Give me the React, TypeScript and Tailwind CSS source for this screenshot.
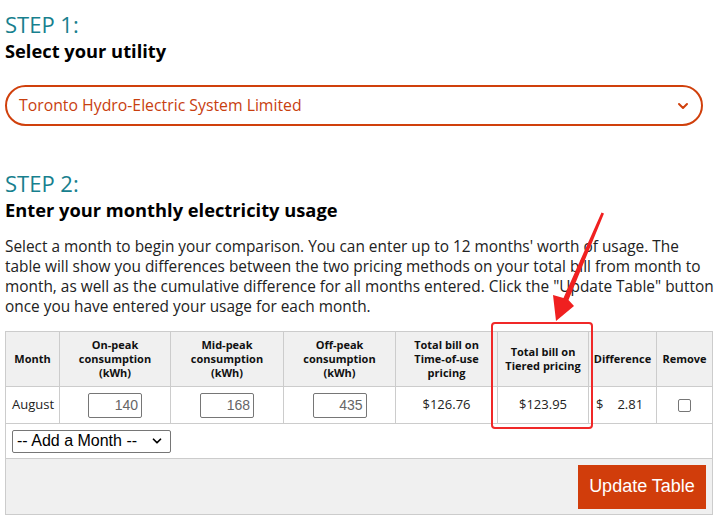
import { ChevronDown } from 'lucide-react';

const headCell = 'border border-[#cccccc] bg-[#f0f0f0] px-1 text-center align-middle text-[11px] font-bold leading-[14px] text-[#111]';
const bodyCell = 'border border-[#cccccc] px-1 align-middle text-[13px] text-[#222]';

function UsageInput({ value }: { value: string }) {
  return (
    <input
      type="text"
      defaultValue={value}
      className="h-[25px] w-[54px] rounded-[2px] border border-[#767676] bg-white pr-[3px] text-right text-[14px] text-[#666] [font-family:'Liberation_Sans',Arial,sans-serif]"
    />
  );
}

export default function App() {
  return (
    <div className="relative h-[524px] w-[720px] overflow-hidden bg-white pl-[5px] [font-family:'Open_Sans',sans-serif]">
      {/* Step 1 */}
      <h2 className="pt-[10px] text-[22px] leading-[28px] text-[#17808e]">STEP 1:</h2>
      <h3 className="mt-[1px] text-[18.3px] font-bold leading-[24px] text-black">Select your utility</h3>

      <div className="mt-[22px] flex h-[41px] w-[698px] items-center justify-between rounded-full border-2 border-[#d0400c] pl-[12px] pr-[10px]">
        <span className="text-[15.8px] text-[#c8400f]">Toronto Hydro-Electric System Limited</span>
        <ChevronDown className="h-[16px] w-[16px] text-[#d0400c]" strokeWidth={3} />
      </div>

      {/* Step 2 */}
      <h2 className="mt-[43px] text-[22px] leading-[28px] text-[#17808e]">STEP 2:</h2>
      <h3 className="mt-[1px] text-[18.3px] font-bold leading-[24px] text-black">Enter your monthly electricity usage</h3>

      <p className="mt-[15px] whitespace-nowrap text-[15.4px] leading-[20px] text-[#222]">
        Select a month to begin your comparison. You can enter up to 12 months' worth of usage. The
        <br />
        table will show you differences between the two pricing methods on your total bill from month to
        <br />
        month, as well as the cumulative difference for all months entered. Click the "Update Table" button
        <br />
        once you have entered your usage for each month.
      </p>

      <table className="mt-[14px] w-[707px] table-fixed border-collapse">
        <colgroup>
          <col className="w-[54px]" />
          <col className="w-[111px]" />
          <col className="w-[113px]" />
          <col className="w-[112px]" />
          <col className="w-[102px]" />
          <col className="w-[91px]" />
          <col className="w-[68px]" />
          <col className="w-[56px]" />
        </colgroup>
        <thead>
          <tr className="h-[55px]">
            <th className={headCell}>Month</th>
            <th className={headCell}>On-peak<br />consumption<br />(kWh)</th>
            <th className={headCell}>Mid-peak<br />consumption<br />(kWh)</th>
            <th className={headCell}>Off-peak<br />consumption<br />(kWh)</th>
            <th className={headCell}>Total bill on<br />Time-of-use<br />pricing</th>
            <th className={headCell}>Total bill on<br />Tiered pricing</th>
            <th className={headCell + ' px-0'}>Difference</th>
            <th className={headCell + ' px-0'}>Remove</th>
          </tr>
        </thead>
        <tbody>
          <tr className="h-[37px]">
            <td className={bodyCell + ' pl-[6px]'}>August</td>
            <td className={bodyCell + ' text-center'}><UsageInput value="140" /></td>
            <td className={bodyCell + ' text-center'}><UsageInput value="168" /></td>
            <td className={bodyCell + ' text-center'}><UsageInput value="435" /></td>
            <td className={bodyCell + ' text-center'}>$126.76</td>
            <td className={bodyCell + ' text-center'}>$123.95</td>
            <td className={bodyCell + ' pl-[7px]'}>
              <span className="flex gap-[14px]">
                <span>$</span>
                <span>2.81</span>
              </span>
            </td>
            <td className={bodyCell + ' text-center'}>
              <span className="inline-block h-[13px] w-[13px] rounded-[2px] border border-[#767676] bg-white align-middle" />
            </td>
          </tr>
          <tr className="h-[35px]">
            <td colSpan={8} className="border border-[#cccccc] px-[6px] align-middle">
              <div className="flex h-[23px] w-[159px] items-center justify-between rounded-[2px] border border-[#767676] pl-[4px] pr-[6px] text-[16px] text-black [font-family:'Liberation_Sans',Arial,sans-serif]">
                <span>-- Add a Month --</span>
                <ChevronDown className="h-[14px] w-[14px]" strokeWidth={3} />
              </div>
            </td>
          </tr>
          <tr className="h-[56px] bg-[#f0f0f0]">
            <td colSpan={8} className="border border-[#cccccc] pr-[6px] text-right align-middle">
              <button className="h-[44px] w-[128px] bg-[#d13d0b] text-[18px] text-white [font-family:'Liberation_Sans',Arial,sans-serif]">
                Update Table
              </button>
            </td>
          </tr>
        </tbody>
      </table>

      {/* annotation: red highlight box and arrow */}
      <div className="absolute left-[491px] top-[322px] h-[107px] w-[102px] rounded-[4px] border-2 border-[#f02828]" />
      <svg className="absolute left-0 top-0" width="720" height="524" viewBox="0 0 720 524">
        <polygon
          points="601.5,212.5 604,213.5 568.5,300 574,306 556,321 553,295 563.5,298"
          fill="#f02020"
        />
      </svg>
    </div>
  );
}
